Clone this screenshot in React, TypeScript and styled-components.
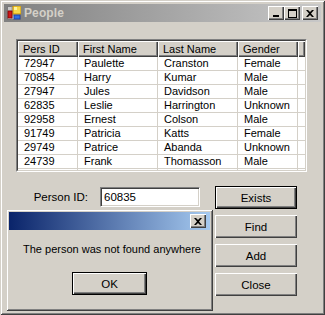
import React from "react";
import styled, { createGlobalStyle, css } from "styled-components";

const Global = createGlobalStyle`
  html, body { margin: 0; padding: 0; background: #d4d0c8; }
  body { font-family: "Liberation Sans", Arial, sans-serif; font-size: 11px; color: #000; }
  * { box-sizing: border-box; }
`;

const raised = css`
  background: #d4d0c8;
  box-shadow: inset 1px 1px #ffffff, inset -1px -1px #404040, inset -2px -2px #808080;
`;

const Window = styled.div`
  position: relative;
  width: 325px;
  height: 315px;
  background: #d4d0c8;
  padding: 4px;
  box-shadow: inset 1px 1px #d4d0c8, inset -1px -1px #404040, inset 2px 2px #ffffff, inset -2px -2px #808080;
  display: flex;
  flex-direction: column;
  overflow: hidden;
`;

const TitleBar = styled.div<{ $active?: boolean }>`
  height: 18px;
  display: flex;
  align-items: center;
  padding: 0 3px 0 3px;
  background: ${(p) =>
    p.$active
      ? "linear-gradient(to right, #0a246a, #a6caf0)"
      : "linear-gradient(to right, #808080, #c8c8c8)"};
`;

const TitleText = styled.span`
  margin-left: 3px;
  font-weight: bold;
  font-size: 12px;
  color: #d4d0c8;
  letter-spacing: 0.1px;
  flex: 1;
`;

const CaptionButtons = styled.div`
  display: flex;
  align-items: center;
`;

const CaptionButton = styled.div<{ $gap?: number }>`
  ${raised};
  width: 16px;
  height: 14px;
  margin-left: ${(p) => p.$gap ?? 0}px;
  display: flex;
  align-items: center;
  justify-content: center;
`;

const Body = styled.div`
  flex: 1;
  padding: 17px 0 0 12px;
  display: flex;
  flex-direction: column;
`;

const ListOuter = styled.div`
  width: 291px;
  height: 133px;
  border: 1px solid;
  border-color: #808080 #ffffff #ffffff #808080;
`;

const ListInner = styled.div`
  width: 100%;
  height: 100%;
  border: 1px solid;
  border-color: #404040 #d4d0c8 #d4d0c8 #404040;
  background: #ffffff;
  overflow: hidden;
`;

const cols = "60px 80px 80px 60px 1fr";

const HeaderRow = styled.div`
  display: grid;
  grid-template-columns: ${cols};
  height: 16px;
`;

const HeaderCell = styled.div`
  ${raised};
  padding-left: 5px;
  display: flex;
  align-items: center;
  white-space: nowrap;
`;

const Row = styled.div`
  display: grid;
  grid-template-columns: ${cols};
  height: 14px;
`;

const Cell = styled.div<{ $last?: boolean }>`
  border-bottom: 1px solid #d4d0c8;
  border-right: ${(p) => (p.$last ? "none" : "1px solid #d4d0c8")};
  padding-left: 6px;
  line-height: 13px;
  white-space: nowrap;
  overflow: hidden;
`;

const BottomArea = styled.div`
  display: flex;
  margin-top: 14px;
`;

const LeftPanel = styled.div`
  width: 199px;
`;

const IdRow = styled.div`
  display: flex;
  align-items: center;
  height: 20px;
  margin-top: 1px;
`;

const Label = styled.span`
  width: 72px;
  text-align: right;
  margin-right: 12px;
  font-size: 11.5px;
`;

const TextBox = styled.div`
  width: 100px;
  height: 20px;
  background: #fff;
  border: 1px solid;
  border-color: #808080 #ffffff #ffffff #808080;
  box-shadow: inset 1px 1px #404040, inset -1px -1px #d4d0c8;
  padding: 0 0 0 3px;
  display: flex;
  align-items: center;
  font-size: 11.5px;
`;

const ButtonColumn = styled.div`
  display: flex;
  flex-direction: column;
  gap: 6px;
`;

const Button = styled.div<{ $default?: boolean; $w?: number }>`
  width: ${(p) => p.$w ?? 82}px;
  height: 23px;
  display: flex;
  align-items: center;
  justify-content: center;
  font-size: 11.5px;
  background: #d4d0c8;
  box-shadow: inset 1px 1px #ffffff, inset -1px -1px #404040, inset -2px -2px #808080;
  ${(p) =>
    p.$default &&
    css`
      border: 1px solid #000;
    `}
`;

const Dialog = styled.div`
  position: absolute;
  left: 6px;
  top: 209px;
  width: 207px;
  height: 102px;
  background: #d4d0c8;
  padding: 3px;
  box-shadow: inset 1px 1px #d4d0c8, inset -1px -1px #404040, inset 2px 2px #ffffff, inset -2px -2px #808080;
  display: flex;
  flex-direction: column;
`;

const DialogCaption = styled.div`
  height: 18px;
  background: linear-gradient(to right, #0a246a, #a6caf0);
  display: flex;
  align-items: flex-start;
  justify-content: flex-end;
  padding: 2px 4px 0 0;
`;

const DialogContent = styled.div`
  display: flex;
  flex-direction: column;
  align-items: center;
`;

const Message = styled.div`
  margin-top: 12px;
  line-height: 14px;
  font-size: 11px;
  padding-left: 5px;
`;

const OkWrap = styled.div`
  margin-top: 16px;
`;

const AppIcon = () => (
  <svg width="14" height="14" viewBox="0 0 14 14">
    <rect x="0.5" y="0.5" width="13" height="13" fill="#c8c8c8" stroke="#7a7a7a" />
    <line x1="0.5" y1="5" x2="13.5" y2="5" stroke="#9a9a9a" />
    <line x1="0.5" y1="9" x2="13.5" y2="9" stroke="#9a9a9a" />
    <line x1="5" y1="0.5" x2="5" y2="13.5" stroke="#9a9a9a" />
    <rect x="6" y="0" width="8" height="8" fill="#f8d848" stroke="#c89000" strokeWidth="1" />
    <rect x="7" y="1" width="3" height="3" fill="#fff4a0" />
    <rect x="1" y="5" width="4" height="7" fill="#d01818" stroke="#800000" strokeWidth="0.8" />
    <rect x="7" y="9" width="6" height="4" fill="#2f6fe0" stroke="#1838a0" strokeWidth="0.8" />
  </svg>
);

const MinGlyph = () => (
  <svg width="8" height="7" viewBox="0 0 8 7">
    <rect x="1" y="5" width="6" height="2" fill="#000" />
  </svg>
);

const MaxGlyph = () => (
  <svg width="9" height="9" viewBox="0 0 9 9">
    <rect x="0.5" y="0.5" width="8" height="8" fill="none" stroke="#000" />
    <rect x="0" y="0" width="9" height="2" fill="#000" />
  </svg>
);

const CloseGlyph = () => (
  <svg width="8" height="7" viewBox="0 0 8 7">
    <path d="M0 0h2l2 2 2-2h2L5 3.5 8 7H6L4 5 2 7H0l3-3.5z" fill="#000" />
  </svg>
);

const people = [
  ["72947", "Paulette", "Cranston", "Female"],
  ["70854", "Harry", "Kumar", "Male"],
  ["27947", "Jules", "Davidson", "Male"],
  ["62835", "Leslie", "Harrington", "Unknown"],
  ["92958", "Ernest", "Colson", "Male"],
  ["91749", "Patricia", "Katts", "Female"],
  ["29749", "Patrice", "Abanda", "Unknown"],
  ["24739", "Frank", "Thomasson", "Male"],
  ["", "", "", ""],
];

export default function App() {
  return (
    <>
      <Global />
      <Window>
        <TitleBar>
          <AppIcon />
          <TitleText>People</TitleText>
          <CaptionButtons>
            <CaptionButton><MinGlyph /></CaptionButton>
            <CaptionButton><MaxGlyph /></CaptionButton>
            <CaptionButton $gap={2}><CloseGlyph /></CaptionButton>
          </CaptionButtons>
        </TitleBar>
        <Body>
          <ListOuter>
            <ListInner>
              <HeaderRow>
                <HeaderCell>Pers ID</HeaderCell>
                <HeaderCell>First Name</HeaderCell>
                <HeaderCell>Last Name</HeaderCell>
                <HeaderCell>Gender</HeaderCell>
                <HeaderCell />
              </HeaderRow>
              {people.map((p, i) => (
                <Row key={i}>
                  {p.map((v, j) => (
                    <Cell key={j}>{v}</Cell>
                  ))}
                  <Cell $last />
                </Row>
              ))}
            </ListInner>
          </ListOuter>
          <BottomArea>
            <LeftPanel>
              <IdRow>
                <Label>Person ID:</Label>
                <TextBox>60835</TextBox>
              </IdRow>
            </LeftPanel>
            <ButtonColumn>
              <Button $default>Exists</Button>
              <Button>Find</Button>
              <Button>Add</Button>
              <Button>Close</Button>
            </ButtonColumn>
          </BottomArea>
        </Body>
        <Dialog>
          <DialogCaption>
            <CaptionButton><CloseGlyph /></CaptionButton>
          </DialogCaption>
          <DialogContent>
            <Message>The person was not found anywhere</Message>
            <OkWrap>
              <Button $default $w={75}>OK</Button>
            </OkWrap>
          </DialogContent>
        </Dialog>
      </Window>
    </>
  );
}
